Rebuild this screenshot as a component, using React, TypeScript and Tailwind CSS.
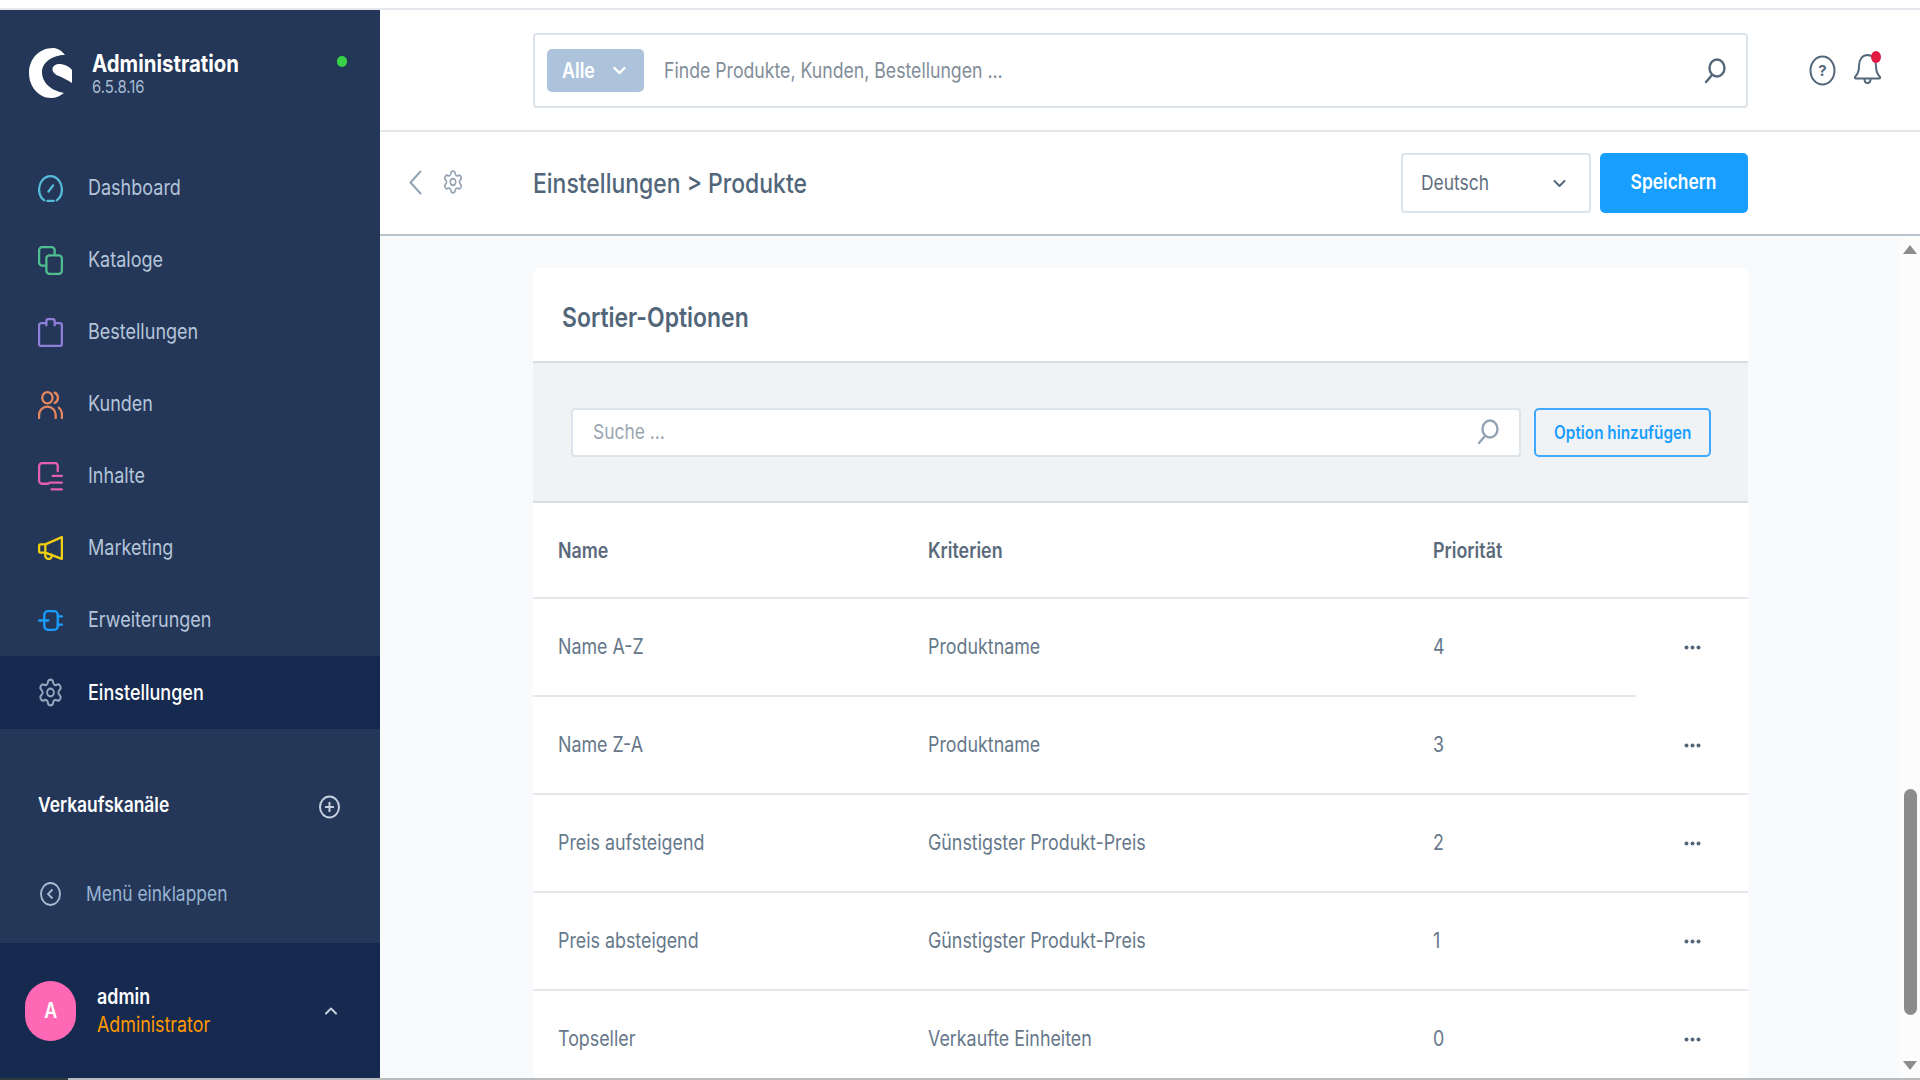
import React from "react";
import { Settings } from "lucide-react";

const F = "font-['Inter','Liberation_Sans',sans-serif]";
const S = "inline-block origin-left scale-x-[0.85] whitespace-nowrap";
const C = "inline-block origin-center scale-x-[0.85] whitespace-nowrap";

type P = { d?: React.ReactNode; c: string; w: number; h: number };
const Ic = ({ d, c, w, h }: P) => (
  <svg width={w} height={h} viewBox="0 0 24 28" fill="none" stroke={c} strokeWidth="2.200" strokeLinecap="round" strokeLinejoin="round" className="shrink-0">
    {d}
  </svg>
);

const nav: { t: string; c: string; d?: React.ReactNode; active?: boolean }[] = [
  { t: "Dashboard", c: "#57bcd9", d: (<><path d="M6 25.500C3 23.300 1 19.500 1 15 1 8 6 2 12 2s11 6 11 13c0 4.500-2 8.300-5 10.500" /><path d="M9 26h6" /><path d="M10 17l4.500-6" /></>) },
  { t: "Kataloge", c: "#4fbf8f", d: (<><path d="M7 19H4a3 3 0 0 1-3-3V4a3 3 0 0 1 3-3h9a3 3 0 0 1 3 3v4" /><rect x="8" y="9" width="15" height="18" rx="3" /></>) },
  { t: "Bestellungen", c: "#8f7fd9", d: (<><path d="M7 5H3a2 2 0 0 0-2 2v18a2 2 0 0 0 2 2h18a2 2 0 0 0 2-2V7a2 2 0 0 0-2-2h-4" /><path d="M8 7V3a2 2 0 0 1 2-2h4a2 2 0 0 1 2 2v4" /></>) },
  { t: "Kunden", c: "#e8875f", d: (<><ellipse cx="9" cy="7.500" rx="5" ry="5.500" /><path d="M1 27v-3a8 8 0 0 1 16 0v3" /><path d="M16 2.500a5.500 5.500 0 0 1 0 10" /><path d="M20 17a8 8 0 0 1 3 7v3" /></>) },
  { t: "Inhalte", c: "#e55fb0", d: (<><path d="M17 1H4a3 3 0 0 0-3 3v14a3 3 0 0 0 3 3h6" /><path d="M17 1a3 3 0 0 1 2 3v5" /><path d="M14 13.500h9M11 20h12M13 26.500h10" /></>) },
  { t: "Marketing", c: "#f2cf0f", d: (<><path d="M7 10L23 3v21L7 18z" /><path d="M7 10H2a1 1 0 0 0-1 1v6a1 1 0 0 0 1 1h5" /><path d="M7 18v3a3 3 0 0 0 3 3h1a3 3 0 0 0 2-4" /></>) },
  { t: "Erweiterungen", c: "#189eff", d: (<><rect x="6" y="5" width="13" height="18" rx="3.500" /><path d="M1 14h9M19 10h4M19 18h4" /></>) },
  { t: "Einstellungen", c: "#94a6bd", active: true },
];

const rows = [
  ["Name A-Z", "Produktname", "4"],
  ["Name Z-A", "Produktname", "3"],
  ["Preis aufsteigend", "Günstigster Produkt-Preis", "2"],
  ["Preis absteigend", "Günstigster Produkt-Preis", "1"],
  ["Topseller", "Verkaufte Einheiten", "0"],
];

const Search = ({ c }: { c: string }) => (
  <svg width="22" height="26" viewBox="0 0 22 26" fill="none" stroke={c} strokeWidth="2.400" strokeLinecap="round" className="shrink-0">
    <ellipse cx="13" cy="10" rx="7.500" ry="8.500" />
    <path d="M8 17l-6 7" />
  </svg>
);

export default function App() {
  return (
    <div className={`${F} w-[1920px] h-[1080px] overflow-hidden bg-white flex flex-col`}>
      <div className="h-[10px] shrink-0 border-b-2 border-[#e4e8ec]" />
      <div className="flex h-[1068px] shrink-0">
        {/* Sidebar */}
        <aside className="w-[380px] shrink-0 bg-[#243758] flex flex-col">
          <div className="h-[142px] shrink-0 pl-[29px] pr-[33px] pt-[38px] flex items-start">
            <svg width="44" height="50" viewBox="0 0 44 50" className="shrink-0" fill="#fff">
              <path d="M36 7C32 2 28 0 24 0 10 0 0 11 0 25s10 25 22 25c5 0 9-2 13-5C24 43 13 36 13 24 13 14 24 7 36 7z" />
              <path d="M23.500 20C25 17 28 15.500 31 16c5 .5 10 3 12 6v13c-4-3-9-5-13-7-4-1.500-7-4-6.500-8z" />
            </svg>
            <div className="ml-[19px] flex-1 mt-[4px]">
              <div className="text-white font-bold text-[24px] leading-[24px]"><span className={S}>Administration</span></div>
              <div className="text-[#a9bbd1] text-[17.500px] leading-[22px]"><span className={S}>6.5.8.16</span></div>
            </div>
            <div className="w-[10px] h-[11px] rounded-full bg-[#37d046] mt-[8px]" />
          </div>
          <nav className="flex flex-col">
            {nav.map((n) => (
              <div key={n.t} className={`pl-[38px] flex items-center gap-[25px] ${n.active ? "h-[73px] pt-[1px] bg-[#162a4f]" : "h-[72px]"}`}>
                {n.d ? (
                  <Ic c={n.c} d={n.d} w={25} h={29} />
                ) : (
                  <Settings color={n.c} width={27} height={31} strokeWidth={1.700} preserveAspectRatio="none" className="shrink-0 -mx-[1px] -mt-[2px]" />
                )}
                <span className={`text-[21.200px] ${S} ${n.active ? "text-white font-medium" : "text-[#b5c5da]"}`}>{n.t}</span>
              </div>
            ))}
          </nav>
          <div className="h-[214px] shrink-0 flex flex-col">
            <div className="h-[150px] shrink-0 pl-[38px] pr-[40px] pt-[61px] flex justify-between items-start">
              <span className={`text-white font-semibold text-[20.500px] ${S}`}>Verkaufskanäle</span>
              <svg width="21" height="24" viewBox="0 0 21 24" fill="none" stroke="#c4d0de" strokeWidth="2" className="mt-[5px]">
                <ellipse cx="10.500" cy="12" rx="9.500" ry="10.500" />
                <path d="M10.500 7v10M6 12h9" />
              </svg>
            </div>
            <div className="flex items-center pl-[40px] gap-[25px]">
              <svg width="21" height="24" viewBox="0 0 21 24" fill="none" stroke="#a9bbd1" strokeWidth="1.800">
                <ellipse cx="10.500" cy="12" rx="9.500" ry="11" />
                <path d="M12.500 7.500L8 12l4.500 4.500" />
              </svg>
              <span className={`text-[20.500px] text-[#98b3d2] ${S}`}>Menü einklappen</span>
            </div>
          </div>
          <div className="flex-1 bg-[#162a4f] pl-[25px] pr-[40px] flex items-center">
            <div className="w-[51px] h-[60px] rounded-full bg-[#ff68b4] text-white font-semibold text-[21px] flex items-center justify-center"><span className={C}>A</span></div>
            <div className="ml-[21px] flex-1">
              <div className="text-white font-semibold text-[21px] leading-[28px]"><span className={S}>admin</span></div>
              <div className="text-[#ff9800] text-[21px] leading-[28px]"><span className={S}>Administrator</span></div>
            </div>
            <svg width="12" height="8" viewBox="0 0 12 8" fill="none" stroke="#c4d0de" strokeWidth="2" strokeLinecap="round" strokeLinejoin="round" className="-ml-[3px] mr-[3px]">
              <path d="M1 6.500L6 1.500l5 5" />
            </svg>
          </div>
        </aside>

        {/* Main */}
        <div className="flex-1 flex flex-col min-w-0">
          <header className="h-[122px] shrink-0 border-b-2 border-[#e4e8ec] flex items-center">
            <div className="ml-[153px] mt-[1px] w-[1215px] h-[75px] border-2 border-[#dde3ea] rounded-[4px] flex items-center pl-[12px] pr-[20px]">
              <div className="w-[97px] h-[43px] rounded-[5px] bg-[#adc3db] text-white font-semibold text-[21px] flex items-center pl-[15px]">
                <span className={`w-[51px] ${S}`}>Alle</span>
                <svg width="13" height="9" viewBox="0 0 13 9" fill="none" stroke="#fff" strokeWidth="2.400" strokeLinecap="round" strokeLinejoin="round">
                  <path d="M1.500 2l5 5 5-5" />
                </svg>
              </div>
              <div className="ml-[20px] flex-1 text-[20.800px] text-[#828d98]"><span className={S}>Finde Produkte, Kunden, Bestellungen ...</span></div>
              <Search c="#54667a" />
            </div>
            <svg width="27" height="31" viewBox="0 0 27 31" fill="none" className="ml-[61px]">
              <ellipse cx="13.500" cy="15.500" rx="12" ry="14" stroke="#54667a" strokeWidth="2" />
              <text x="13.500" y="21" textAnchor="middle" fontSize="15" fontWeight="700" fill="#54667a" stroke="none">?</text>
            </svg>
            <svg width="27" height="34" viewBox="0 0 27 34" fill="none" stroke="#54667a" strokeWidth="2" strokeLinecap="round" strokeLinejoin="round" className="ml-[18px] -mt-[4px]">
              <path d="M5 15c0-6 3-11 8.500-11S22 9 22 15c0 5 1 8 4 11 .5.700 0 1.500-1 1.500H2c-1 0-1.500-.8-1-1.500 3-3 4-6 4-11z" />
              <path d="M10.500 28c0 3 1.500 4 3 4s3-1 3-4" />
              <ellipse cx="22" cy="6" rx="5" ry="6" fill="#e21b41" stroke="none" />
            </svg>
          </header>
          <div className="h-[104px] shrink-0 border-b-2 border-[#b8c3cf] flex items-center">
            <svg width="13" height="25" viewBox="0 0 13 25" fill="none" stroke="#94a3b3" strokeWidth="2" strokeLinecap="round" strokeLinejoin="round" className="ml-[29px] -mt-[2px]">
              <path d="M11.500 1.500L1.500 12.500l10 11" />
            </svg>
            <Settings color="#94a3b3" width={22} height={26} strokeWidth={1.700} preserveAspectRatio="none" className="ml-[20px] -mt-[2px] shrink-0" />
            <div className="ml-[69px] pt-[2px] text-[27px] font-medium text-[#52667a] w-[868px] shrink-0"><span className={S}>Einstellungen &gt; Produkte</span></div>
            <div className="w-[190px] h-[60px] shrink-0 border-2 border-[#dde3ea] rounded-[4px] flex items-center justify-between pl-[18px] pr-[23px]">
              <span className={`text-[20.500px] text-[#5f6f80] ${S}`}>Deutsch</span>
              <svg width="13" height="9" viewBox="0 0 13 9" fill="none" stroke="#54667a" strokeWidth="2" strokeLinecap="round" strokeLinejoin="round">
                <path d="M1.500 2l5 5 5-5" />
              </svg>
            </div>
            <div className="ml-[9px] w-[148px] h-[60px] rounded-[5px] bg-[#189eff] text-white font-semibold text-[20.500px] flex items-center justify-center"><span className={`${C} -mt-[2px]`}>Speichern</span></div>
          </div>
          {/* Content */}
          <div className="flex-1 bg-[#f9fafc] flex min-h-0 overflow-hidden">
            <div className="ml-[153px] mt-[32px] w-[1215px] bg-white rounded-t-[6px] shrink-0 flex flex-col">
              <div className="h-[95px] shrink-0 flex items-center pl-[29px] pt-[8px] border-b-2 border-[#d9dee4] text-[27px] font-semibold text-[#52667a]"><span className={S}>Sortier-Optionen</span></div>
              <div className="h-[140px] shrink-0 bg-[#f0f2f5] border-b-2 border-[#d9dee4] flex items-center pl-[38px]">
                <div className="w-[950px] h-[49px] bg-white border-2 border-[#dde3ea] rounded-[4px] flex items-center justify-between pl-[20px] pr-[20px]">
                  <span className={`text-[20.500px] text-[#9aa5b1] ${S}`}>Suche ...</span>
                  <Search c="#94a3b3" />
                </div>
                <div className="ml-[13px] w-[177px] h-[49px] border-2 border-[#3fa9ff] rounded-[5px] text-[#189eff] font-semibold text-[18px] flex items-center justify-center"><span className={C}>Option hinzufügen</span></div>
              </div>
              <div className="grid grid-cols-[370px_505px_1fr_64px] pl-[25px] pt-[2px] h-[96px] shrink-0 items-center border-b-2 border-[#e4e8ec] font-semibold text-[21px] text-[#5a6a7b]">
                <span className={S}>Name</span>
                <span className={S}>Kriterien</span>
                <span className={S}>Priorität</span>
                <span />
              </div>
              {rows.map((r, i) => (
                <div key={r[0]} className="relative grid grid-cols-[370px_505px_1fr_64px] pl-[25px] h-[98px] shrink-0 items-center border-b-2 border-[#e4e8ec] text-[21px] text-[#66788a]">
                  <span className={S}>{r[0]}</span>
                  <span className={S}>{r[1]}</span>
                  <span className={S}>{r[2]}</span>
                  <svg width="17" height="5" viewBox="0 0 17 5" fill="#54667a" className="mt-[1px]">
                    <circle cx="2.500" cy="2.500" r="2" />
                    <circle cx="8.500" cy="2.500" r="2" />
                    <circle cx="14.500" cy="2.500" r="2" />
                  </svg>
                  {i === 0 && <div className="absolute right-0 -bottom-[2px] w-[112px] h-[2px] bg-white" />}
                </div>
              ))}
            </div>
            {/* scrollbar drawn */}
            <div className="ml-auto w-[20px] shrink-0 flex flex-col items-center justify-between pt-[9px] pb-[8px] bg-[#fcfcfd]">
              <svg width="14" height="9" viewBox="0 0 14 9" fill="#8c8c8c"><path d="M7 0l7 9H0z" /></svg>
              <div className="flex-1 flex items-end pb-[46px] w-full justify-center">
                <div className="w-[13px] h-[226px] rounded-full bg-[#8c8c8c]" />
              </div>
              <svg width="14" height="9" viewBox="0 0 14 9" fill="#8c8c8c"><path d="M7 9l7-9H0z" /></svg>
            </div>
          </div>
        </div>
      </div>
      <div className="h-[2px] shrink-0 bg-[#b9bcbf] flex"><div className="w-[68px] bg-[#2c3a3f]" /></div>
    </div>
  );
}
